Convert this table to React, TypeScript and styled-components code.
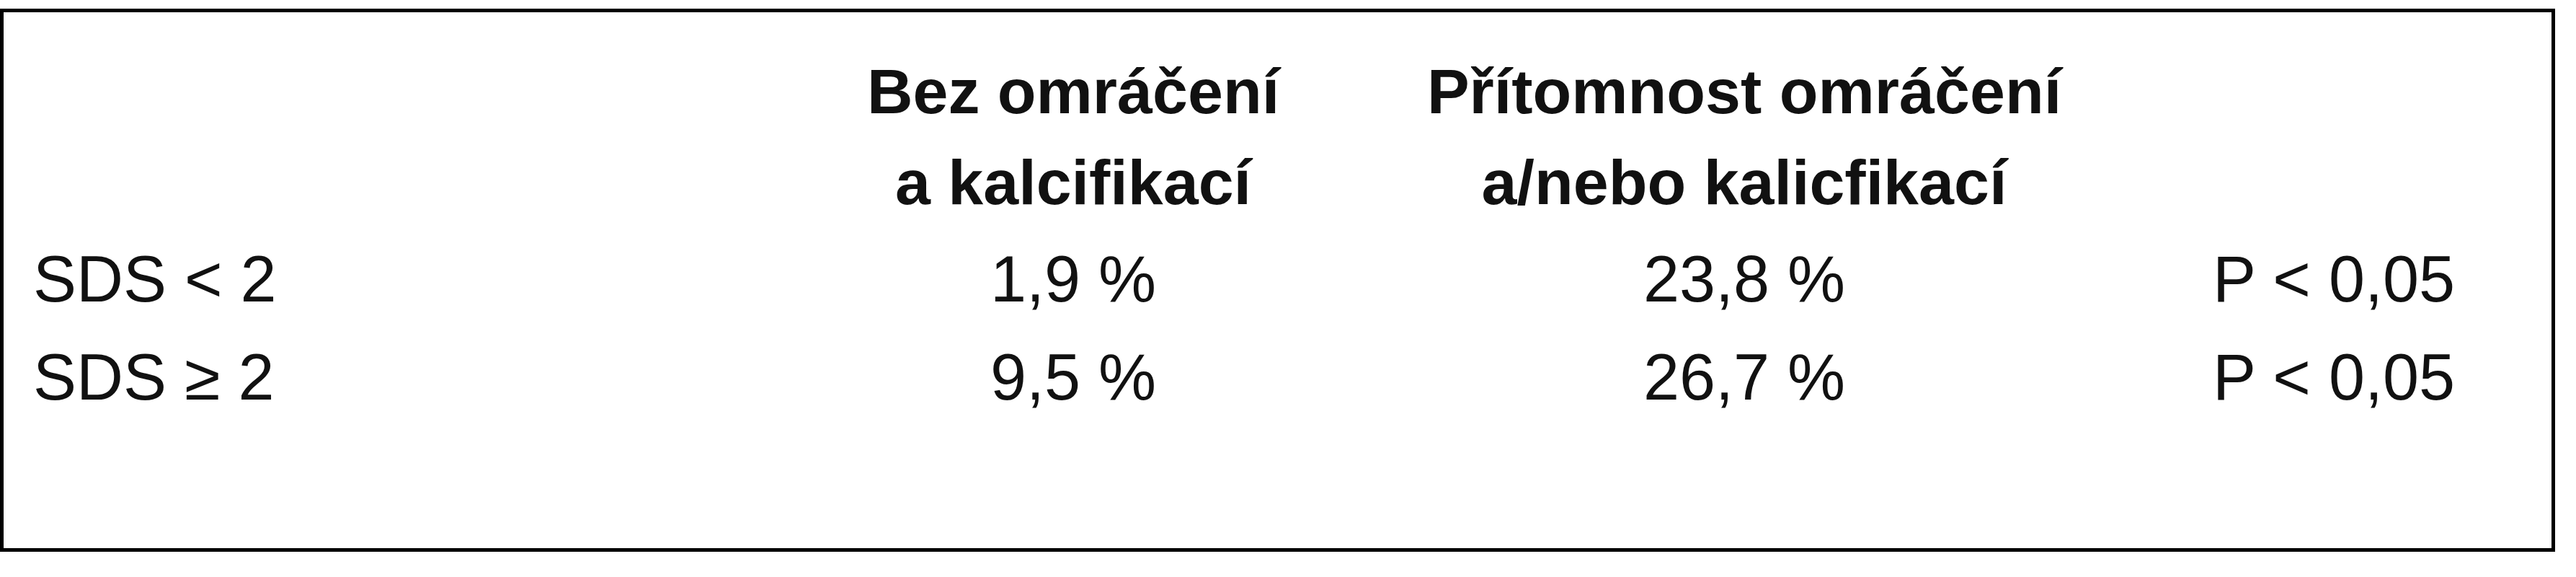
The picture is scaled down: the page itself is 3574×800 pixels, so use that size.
import * as React from "react"
import styled, { createGlobalStyle } from "styled-components"

const GlobalStyle = createGlobalStyle`
  html, body {
    margin: 0;
    padding: 0;
    background: #ffffff;
  }
`

const Frame = styled.div`
  margin-top: 12px;
  width: 3545px;
  height: 753px;
  box-sizing: border-box;
  border: 5px solid #000000;
  padding-top: 47px;
  background: #ffffff;
  color: #111111;
  font-family: "Liberation Sans", Arial, sans-serif;
`

const Table = styled.div`
  display: grid;
  grid-template-columns: 1069px 830px 1032px 604px;
`

const HeadCell = styled.div`
  font-size: 88px;
  font-weight: 700;
  line-height: 126px;
  text-align: center;
  white-space: nowrap;
  padding-bottom: 3px;
`

const Cell = styled.div<{ $label?: boolean }>`
  font-size: 90px;
  line-height: 136px;
  white-space: nowrap;
  text-align: ${(p) => (p.$label ? "left" : "center")};
  padding-left: ${(p) => (p.$label ? "41px" : "0")};
`

type Row = {
  label: string
  without: string
  withStun: string
  p: string
}

const rows: Row[] = [
  { label: "SDS < 2", without: "1,9 %", withStun: "23,8 %", p: "P < 0,05" },
  { label: "SDS ≥ 2", without: "9,5 %", withStun: "26,7 %", p: "P < 0,05" },
]

const App = () => {
  return (
    <>
      <GlobalStyle />
      <Frame>
        <Table>
          <HeadCell />
          <HeadCell>
            Bez omráčení
            <br />a kalcifikací
          </HeadCell>
          <HeadCell>
            Přítomnost omráčení
            <br />
            a/nebo kalicfikací
          </HeadCell>
          <HeadCell />
          {rows.map((r) => (
            <React.Fragment key={r.label}>
              <Cell $label>{r.label}</Cell>
              <Cell>{r.without}</Cell>
              <Cell>{r.withStun}</Cell>
              <Cell>{r.p}</Cell>
            </React.Fragment>
          ))}
        </Table>
      </Frame>
    </>
  )
}

export default App
